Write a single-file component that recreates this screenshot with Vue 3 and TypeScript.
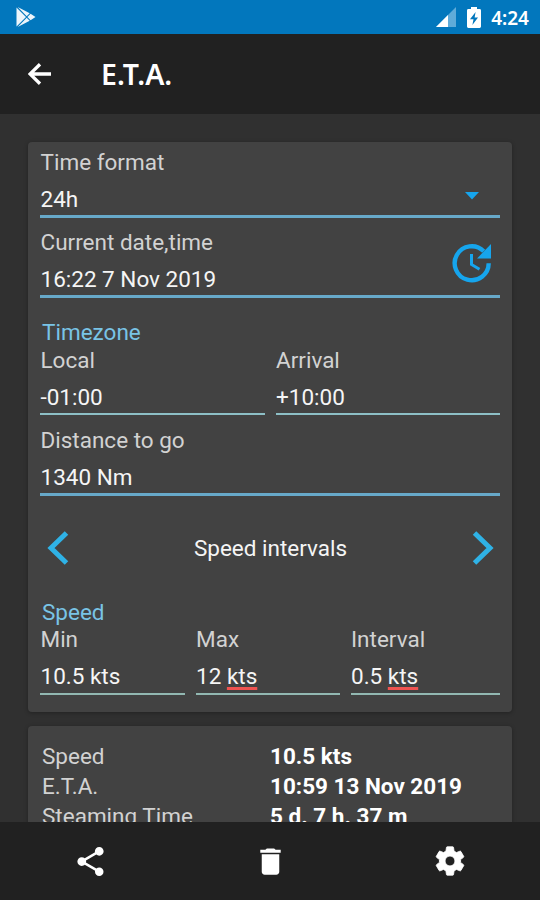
<script setup lang="ts">
interface Field {
  label: string
  value: string
  unit?: string
}

const zones: Field[] = [
  { label: 'Local', value: '-01:00' },
  { label: 'Arrival', value: '+10:00' },
]

const speeds: Field[] = [
  { label: 'Min', value: '10.5 kts' },
  { label: 'Max', value: '12', unit: 'kts' },
  { label: 'Interval', value: '0.5', unit: 'kts' },
]

const results: Field[] = [
  { label: 'Speed', value: '10.5 kts' },
  { label: 'E.T.A.', value: '10:59 13 Nov 2019' },
  { label: 'Steaming Time', value: '5 d. 7 h. 37 m' },
]
</script>

<template>
  <div class="screen">
    <div class="status">
      <svg class="play" viewBox="0 0 20 20">
        <path d="M.5.5v19L10 10z M1.700 0l9 9.300 3-3z M1.700 20l9-9.300 3 3z M14.600 6.800L11.400 10l3.200 3.200L19.500 10z" fill="#fff" fill-opacity=".93" />
      </svg>
      <svg class="signal" viewBox="0 0 20 20">
        <path d="M20 0v20H0z" fill="#5fabd9" />
        <path d="M12 8v12H0z" fill="#fff" />
      </svg>
      <svg class="battery" viewBox="0 0 14 21">
        <path d="M4 0h6v2h2.600A1.400 1.400 0 0 1 14 3.400v16.200a1.400 1.400 0 0 1-1.400 1.400H1.400A1.400 1.400 0 0 1 0 19.600V3.400A1.400 1.400 0 0 1 1.400 2H4z" fill="#fff" />
        <path d="M8.600 5L3 12.200h3.500L5.400 18 11 10.600H7.600z" fill="#0277bd" />
      </svg>
      <span class="clock">4:24</span>
    </div>

    <header class="appbar">
      <svg class="back" viewBox="0 0 24 22">
        <path d="M23 11H2.500M12 1.300L2 11l10 9.700" fill="none" stroke="#fff" stroke-width="3.300" />
      </svg>
      <h1>E.T.A.</h1>
    </header>

    <main class="content">
      <section class="card form">
        <div class="field wide">
          <label>Time format</label>
          <div class="value">24h</div>
          <svg class="caret" viewBox="0 0 14 8"><path d="M0 0h14L7 7.500z" fill="#16a5ed" /></svg>
        </div>
        <div class="field wide">
          <label>Current date,time</label>
          <div class="value">16:22 7 Nov 2019</div>
          <svg class="refresh" viewBox="0 0 40 40">
            <path d="M36.700 20.300A17 17 0 1 1 31.700 8.200" fill="none" stroke="#16a5ed" stroke-width="4.400" />
            <path d="M39 1v14.500H25z" fill="#16a5ed" />
            <path d="M19.500 11v10.500l8 4.700" fill="none" stroke="#16a5ed" stroke-width="3" />
          </svg>
        </div>

        <h2 class="zone-title">Timezone</h2>
        <div class="cols two">
          <div v-for="f in zones" :key="f.label" class="field">
            <label>{{ f.label }}</label>
            <div class="value">{{ f.value }}</div>
          </div>
        </div>

        <div class="field wide distance">
          <label>Distance to go</label>
          <div class="value">1340 Nm</div>
        </div>

        <div class="switcher">
          <svg viewBox="0 0 22 34"><path d="M19.500 2L4 17l15.500 15" fill="none" stroke="#2fb2e6" stroke-width="5" /></svg>
          <span>Speed intervals</span>
          <svg viewBox="0 0 22 34"><path d="M2.500 2L18 17 2.500 32" fill="none" stroke="#2fb2e6" stroke-width="5" /></svg>
        </div>

        <h2 class="speed-title">Speed</h2>
        <div class="cols three">
          <div v-for="f in speeds" :key="f.label" class="field">
            <label>{{ f.label }}</label>
            <div class="value">{{ f.unit ? f.value + ' ' : f.value }}<span v-if="f.unit" class="misspelt">{{ f.unit }}</span></div>
          </div>
        </div>
      </section>

      <section class="card results">
        <div v-for="r in results" :key="r.label" class="result">
          <span>{{ r.label }}</span>
          <strong>{{ r.value }}</strong>
        </div>
      </section>
    </main>

    <nav class="bottom">
      <div class="action">
        <svg viewBox="0 0 24 24"><path d="M18 16.080c-.76 0-1.440.3-1.960.77L8.910 12.700c.05-.23.09-.46.09-.7s-.04-.47-.09-.7l7.050-4.110c.54.5 1.250.81 2.040.81 1.660 0 3-1.340 3-3s-1.340-3-3-3-3 1.340-3 3c0 .24.04.47.09.7L8.040 9.810C7.500 9.310 6.790 9 6 9c-1.660 0-3 1.340-3 3s1.340 3 3 3c.79 0 1.500-.31 2.040-.81l7.120 4.160c-.05.21-.08.43-.08.65 0 1.610 1.310 2.920 2.920 2.920s2.920-1.310 2.920-2.920-1.310-2.920-2.920-2.920z" /></svg>
      </div>
      <div class="action">
        <svg viewBox="0 0 24 24"><path d="M6 19c0 1.100.9 2 2 2h8c1.100 0 2-.9 2-2V7H6v12zM19 4h-3.500l-1-1h-5l-1 1H5v2h14V4z" /></svg>
      </div>
      <div class="action">
        <svg class="gear" viewBox="0 0 24 24"><path d="M19.430 12.980c.04-.32.07-.64.07-.98s-.03-.66-.07-.98l2.110-1.650c.19-.15.24-.42.12-.64l-2-3.460c-.12-.22-.39-.3-.61-.22l-2.490 1c-.52-.4-1.080-.73-1.690-.98l-.38-2.650C14.460 2.180 14.250 2 14 2h-4c-.25 0-.46.18-.49.42l-.38 2.650c-.61.25-1.170.59-1.690.98l-2.490-1c-.23-.09-.49 0-.61.22l-2 3.460c-.13.22-.07.49.12.64l2.110 1.650c-.04.32-.07.65-.07.98s.03.66.07.98l-2.110 1.650c-.19.15-.24.42-.12.64l2 3.460c.12.22.39.3.61.22l2.490-1c.52.4 1.080.73 1.690.98l.38 2.650c.03.24.24.42.49.42h4c.25 0 .46-.18.49-.42l.38-2.650c.61-.25 1.170-.59 1.690-.98l2.490 1c.23.09.49 0 .61-.22l2-3.460c.12-.22.07-.49-.12-.64l-2.110-1.650zM12 15.500c-1.930 0-3.500-1.570-3.500-3.500s1.570-3.500 3.500-3.500 3.500 1.570 3.500 3.500-1.570 3.500-3.500 3.500z" /></svg>
      </div>
    </nav>
  </div>
</template>

<style>
body {
  margin: 0;
  background: #303030;
}
</style>

<style scoped>
.screen {
  width: 540px;
  height: 900px;
  display: flex;
  flex-direction: column;
  overflow: hidden;
  background: #303030;
  color: #f5f5f5;
  font-family: Roboto, "Liberation Sans", sans-serif;
  font-size: 22.5px;
}

svg {
  display: block;
  flex: none;
}

.status {
  flex: none;
  box-sizing: border-box;
  height: 34px;
  padding: 0 11px 0 16px;
  display: flex;
  align-items: center;
  background: #0277bd;
}

.play {
  width: 20px;
  height: 20px;
}

.signal {
  width: 20px;
  height: 20px;
  margin-left: auto;
}

.battery {
  width: 14px;
  height: 21px;
  margin: 0 10px 0 11px;
}

.clock {
  font: 600 19px/34px "Noto Sans", sans-serif;
  color: #fff;
  padding-top: 2px;
}

.appbar {
  flex: none;
  box-sizing: border-box;
  height: 80px;
  padding-left: 28px;
  display: flex;
  align-items: center;
  background: #212121;
}

.back {
  width: 24px;
  height: 22px;
}

h1 {
  margin: 0 0 0 49px;
  font: 600 28.5px/36px "Noto Sans", sans-serif;
  color: #fff;
}

.content {
  flex: 1;
  min-height: 0;
  overflow: hidden;
  padding: 28px 28px 0;
}

.card {
  box-sizing: border-box;
  background: #424242;
  border-radius: 4px;
  box-shadow: 0 1px 4px rgba(0, 0, 0, 0.3);
}

.form {
  height: 570px;
  padding: 7px 12px 0;
}

.field {
  position: relative;
  box-sizing: border-box;
  height: 68px;
  border-bottom: 2px solid #8dbfc6;
}

.wide {
  height: 69px;
  margin-bottom: 11px;
  border-bottom: 3px solid #67a9c9;
}

label {
  display: block;
  height: 27px;
  line-height: 27px;
  padding-left: 0.5px;
  color: #d2d2d2;
}

.value {
  margin-top: 9px;
  padding-left: 0.5px;
  line-height: 28px;
  white-space: pre;
}

.caret {
  position: absolute;
  right: 21px;
  top: 43px;
  width: 14px;
  height: 8px;
}

.refresh {
  position: absolute;
  right: 8px;
  top: 14px;
  width: 40px;
  height: 40px;
}

h2 {
  margin: 0 0 0 2px;
  font-size: 22.5px;
  line-height: 28px;
  font-weight: 400;
  color: #79c4e6;
}

.zone-title {
  margin-top: 20px;
  margin-bottom: 1px;
}

.speed-title {
  margin-top: -1px;
}

.cols {
  display: grid;
  column-gap: 11px;
}

.two {
  grid-template-columns: 1fr 1fr;
}

.three {
  grid-template-columns: 145px 144px 1fr;
}

.three .field {
  height: 69px;
  border-bottom-color: #92b8b2;
}

.three .field + .field label,
.three .field + .field .value {
  padding-left: 0;
}

.distance {
  margin: 12px 0 0;
}

.switcher {
  display: flex;
  align-items: center;
  justify-content: space-between;
  height: 103px;
  padding: 0 6px 0 7px;
}

.switcher svg {
  width: 22px;
  height: 34px;
}

.misspelt {
  text-decoration: underline 3px #ef5350;
  text-decoration-skip-ink: none;
  text-underline-offset: 3px;
}

.results {
  height: 200px;
  margin-top: 14px;
  padding: 15px 14px;
}

.result {
  display: grid;
  grid-template-columns: 228px 1fr;
  line-height: 30px;
  color: #d2d2d2;
}

strong {
  font-weight: 700;
  color: #fff;
}

.bottom {
  flex: none;
  height: 78px;
  display: grid;
  grid-template-columns: repeat(3, 1fr);
  background: #212121;
}

.action {
  display: flex;
  align-items: center;
  justify-content: center;
}

.action svg {
  width: 35px;
  height: 35px;
  fill: #fff;
}

.action .gear {
  width: 34px;
  height: 34px;
  stroke: #fff;
  stroke-width: 0.6;
}
</style>
